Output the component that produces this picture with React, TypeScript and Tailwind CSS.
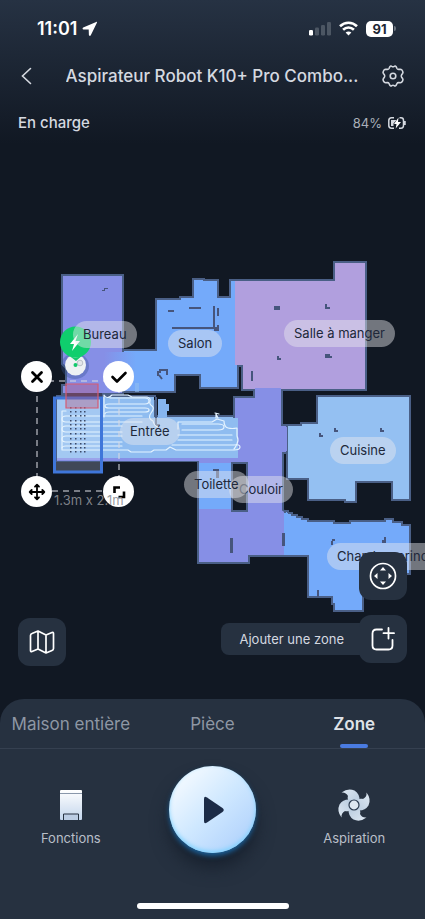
import { useState } from "react";

type Room = { name: string; place: string };

const rooms: Room[] = [
  { name: "Bureau", place: "left-[73px] top-[177px]" },
  { name: "Salon", place: "left-[168px] top-[186px]" },
  { name: "Salle à manger", place: "left-[284px] top-[176px]" },
  { name: "Entrée", place: "left-[120px] top-[274px]" },
  { name: "Couloir", place: "left-[229px] top-[332px]" },
  { name: "Toilette", place: "left-[184px] top-[327px]" },
  { name: "Cuisine", place: "left-[330px] top-[293px]" },
  { name: "Chambre principale", place: "left-[327px] top-[399px]" },
];

const tabs = ["Maison entière", "Pièce", "Zone"];

function StatusBar() {
  return (
    <div className="flex h-[56px] items-center justify-between pt-px pl-[37px] pr-[29px] text-white">
      <div className="flex items-center gap-[5px]">
        <span className="text-[18px] leading-[22px] font-semibold">11:01</span>
        <svg width="16" height="16" viewBox="0 0 16 16" fill="currentColor" aria-hidden="true">
          <path d="M14.2.9 1.2 6.500c-1 .5-.8 1.800.3 1.900l5.200.2.2 5.300c.1 1.100 1.500 1.300 1.900.3L14.900 1.700c.3-.6-.2-1-.7-.8Z" />
        </svg>
      </div>
      <div className="flex items-center gap-[8px]">
        <svg width="22" height="15" viewBox="0 0 22 15" fill="#4c5663" aria-hidden="true">
          <rect x="0" y="9" width="4" height="5.500" rx="1.200" fill="#fff" />
          <rect x="6" y="6.500" width="4" height="8" rx="1.200" />
          <rect x="12" y="4" width="4" height="10.500" rx="1.200" />
          <rect x="18" y="1" width="4" height="13.500" rx="1.200" />
        </svg>
        <svg width="19" height="15" viewBox="0 0 19 15" fill="none" stroke="currentColor" strokeWidth="2.600" aria-hidden="true">
          <path d="M1 5.200c4.900-4.700 12.100-4.700 17 0" />
          <path d="M4.100 8.700c3.100-3 7.700-3 10.800 0" />
          <path d="M9.500 14.600 6.600 11.600c1.700-1.500 4.100-1.500 5.800 0Z" fill="currentColor" stroke="none" />
        </svg>
        <div className="flex items-center gap-px">
          <span className="flex h-[16px] w-[27px] items-center justify-center rounded-[5px] bg-white text-[13px] leading-[16px] font-bold text-[#1d2734]">
            91
          </span>
          <span className="h-[5px] w-[2px] rounded-r-full bg-[#6a737f]" />
        </div>
      </div>
    </div>
  );
}

function FloorPlan() {
  return (
    <svg width="425" height="555" viewBox="0 144 425 555" className="block" aria-hidden="true">
      <defs>
        <linearGradient id="mix" x1="104" y1="0" x2="136" y2="0" gradientUnits="userSpaceOnUse">
          <stop offset="0" stopColor="#868fe6" />
          <stop offset="1" stopColor="#74aafa" />
        </linearGradient>
      </defs>

      <g stroke="#4a5f86" strokeWidth="2">
        <path fill="#868fe6" d="M62 275H123V394H62V385H66V368L62 364Z" />
        <path
          fill="#74aafa"
          d="M123 350H156V299H180V297H193V279H204V280H218V297H230V280H238V388H200V375H175V392H123Z"
        />
        <path fill="#b19fde" d="M235 280H334V262H366V390H242V366H238V280Z" />
        <path fill="#868fe6" d="M234 397H254V390H282V425H288V453H283V510L286 512V556H249V563H198V461H234Z" />
        <path
          fill="#94c0f2"
          d="M317 396H410V500H392V482H356V502H345V500H308V479H287V425H301V423H317Z"
        />
        <path
          fill="#74aafa"
          d="M285 511H288V513H292V515H297V517H302V519H308V521H334V523H350V521H385V519H393V522H402V525H410V574H363V611H334V604H332V597H308V556H285Z"
        />
        <path fill="#8fbcf0" d="M57 396H155V416H234V461H57Z" />
      </g>

      <path fill="#b19fde" d="M235 281H240V365H235Z" />
      <path fill="#868fe6" d="M255 388H281V398H255ZM282 427H287V451H282ZM231 418H238V460H231ZM199 458H246V464H199ZM57 458H238V461H57Z" />
      <path fill="url(#mix)" d="M104 352H150V391H104Z" />
      <path fill="#8fbcf0" d="M57 397H154V458H57ZM152 418H238V458H152Z" />
      <path fill="#74aafa" d="M199 463H232V509H199ZM284 513H288V555H284Z" />
      <path fill="#111823" stroke="#4a5f86" strokeWidth="2" d="M232 463H247V511H232Z" />
      <path fill="#111823" d="M239 368H241V388H239Z" />
      <path fill="#86b5ef" d="M158 399H166V404H169V411H167V418H158Z" />
      <path fill="#8fbcf0" d="M135 383H139V392H135Z" opacity=".6" />
      <path fill="#111823" d="M154 397H156V400H154Z" />
      <path fill="none" stroke="#4a5f86" strokeWidth="2" d="M156 397V425H160" />

      <g fill="#46557c">
        <path d="M102 290H104V288H108V289H105V291H102ZM230 538H233V553H230ZM282 533H285V546H282ZM251 371H253V381H251Z" />
        <path d="M274 306H280V310H274ZM325 304H327V307H330V309H325ZM277 356H279V358H281V360H277ZM325 354H330V356H332V358H325Z" />
        <path d="M319 433H321V435H323V437H319ZM334 428H336V430H338V432H334ZM380 428H382V430H384V432H380Z" />
        <path d="M168 310H174V312H168ZM189 307H201V309H189ZM213 306H215V329H213ZM217 308H219V316H217ZM217 325H219V331H214V329H172V327H217Z" />
        <path d="M331 541H332V539H335V541H333V545H331ZM382 540H384V537H386V543H382ZM213 469H219V478H216V471H213ZM317 590H319V597H317Z" />
      </g>
      <path d="M158 376v-4h2v-2h7v5M159 375l3 4" fill="none" stroke="#46557c" strokeWidth="2" />

      <path fill="#3a3f59" d="M66 393H102V398H66Z" />
      <path fill="#404858" d="M55 462H101V472H55Z" />
      <path fill="#ffffff" opacity=".18" d="M57 399H101V460H57Z" />

      <g fill="none" stroke="#e4f3ff" strokeWidth="1.200" strokeLinejoin="round" strokeLinecap="round">
        <path d="M104 417V395q3 5 8 0h16l4 2h15q4 1 3 4t2 5-1 7 2 8q1 5 5 6" />
        <path d="M110 398h35q4 0 4 3t-4 3h-36q-4 0-4 2t4 2h36q4 0 4 2t-4 2h-36q-4 0-4 2" />
        <path d="M142 416H66q-4 0-4 3t4 3h76M122 426H66q-4 0-4 3t4 3h56M122 436H66q-4 0-4 3t4 3h56M122 446H66q-4 0-4 2" />
        <path d="M66 411h-4v39h66l3 2h20l3-2h12l4-3 6 3h58q6 0 6-3t-6-2h-62" />
        <path d="M178 429v-7h34l5-3 7 2q0 6 4 7t9 0v8q2 4 0 8t-3 5" />
        <path d="M182 424h36q6 0 6 3t-6 3h-36M178 435h54M178 440h54M216 418v-4l2 4M215 413l4 1" />
      </g>

      <g fill="#3c4a68">
        {[70, 75, 80, 84].map((x) =>
          [407, 411, 415, 420, 424, 428, 433, 438, 443, 447, 451].map((y) => (
            <rect key={`${x}-${y}`} x={x} y={y} width="1.500" height="1.500" />
          )),
        )}
      </g>

      <path d="M37 381H119V491H37Z" fill="none" stroke="#d5d9e0" strokeWidth="1.500" strokeDasharray="6 5" opacity=".7" />
      <path d="M54.500 398H101.500V472H54.500Z" fill="none" stroke="#3f76da" strokeWidth="3" />
      <path d="M66 384H98V408H66Z" fill="#b95075" fillOpacity=".35" stroke="#d65c72" strokeWidth="1.200" />

      <ellipse cx="75" cy="366" rx="14" ry="13" fill="#33508f" opacity=".35" />
      <circle cx="75.500" cy="365" r="10.500" fill="#eef1f4" />
      <circle cx="80" cy="363" r="2.800" fill="#e4e6ea" stroke="#bcc1c9" />
      <path d="M67 354q8 7 17 0l-8 7Z" fill="#12c96b" />
      <circle cx="75.500" cy="365" r="2" fill="#12c96b" />
      <circle cx="75.500" cy="342" r="15.500" fill="#0fce6d" />
      <path d="m78 334-8 10h4l-2 7 8-10h-4.500Z" fill="#fff" />
    </svg>
  );
}

const handle = "absolute flex size-[31px] items-center justify-center rounded-full bg-white text-black";
const tile = "flex size-[48px] items-center justify-center rounded-[12px] bg-[#263140] text-white";

function ZoneHandles() {
  return (
    <>
      <button className={`${handle} left-[21px] top-[217px]`} aria-label="Supprimer">
        <svg width="16" height="16" viewBox="0 0 16 16" stroke="currentColor" strokeWidth="2.800" strokeLinecap="round">
          <path d="m3.500 3.500 9 9m0-9-9 9" />
        </svg>
      </button>
      <button className={`${handle} left-[103px] top-[217px]`} aria-label="Valider">
        <svg width="18" height="16" viewBox="0 0 18 16" fill="none" stroke="currentColor" strokeWidth="2.600" strokeLinecap="round" strokeLinejoin="round">
          <path d="m2.500 8 4.500 4.500 8.500-8.500" />
        </svg>
      </button>
      <button className={`${handle} left-[21px] top-[332px]`} aria-label="Déplacer">
        <svg width="18" height="18" viewBox="0 0 18 18" fill="none" stroke="currentColor" strokeWidth="1.800" strokeLinecap="round" strokeLinejoin="round">
          <path d="M9 2v14M2 9h14M7 3.700l2-2 2 2M7 14.300l2 2 2-2M3.700 7l-2 2 2 2M14.300 7l2 2-2 2" />
        </svg>
      </button>
      <button className={`${handle} left-[103px] top-[332px]`} aria-label="Redimensionner">
        <svg width="16" height="16" viewBox="0 0 16 16" fill="none" stroke="currentColor" strokeWidth="2.600">
          <path d="M3.500 9V3.500H9M13 7.500V13H7.500" />
        </svg>
      </button>
      <span className="absolute left-[54px] top-[347px] text-[13px] leading-[18px] whitespace-nowrap text-[#8c8f95]/90">
        1.3m x 2.1m
      </span>
    </>
  );
}

export default function App() {
  const [active, setActive] = useState("Zone");
  return (
    <div className="flex min-h-screen flex-col overflow-hidden bg-[#111823] font-['Inter','Liberation_Sans',sans-serif] text-[#d5d9e0]">
      <header className="bg-linear-to-b from-[#263243] to-[#111823]">
        <StatusBar />
        <div className="flex h-[40px] items-center justify-between pl-[19px] pr-[20px]">
          <button aria-label="Retour" className="flex w-[24px]">
            <svg width="16" height="20" viewBox="0 0 16 20" fill="none" stroke="currentColor" strokeWidth="1.600" strokeLinecap="round">
              <path d="m11.500 2.500-8 7.500 8 7.500" />
            </svg>
          </button>
          <h1 className="truncate text-[17px] leading-[24px] font-medium">Aspirateur Robot K10+ Pro Combo...</h1>
          <button aria-label="Réglages">
            <svg width="24" height="24" viewBox="0 0 24 24" fill="none" stroke="currentColor" strokeWidth="1.600" strokeLinejoin="round">
              <path d="M8.700 3q1-1.500 2.100-.6 1.200.8 2.400 0 1.100-.9 2.100.6l.7 1.500q.5 1 1.800.9l1.600-.2q1.300 0 2.100 1.600.9 1.600.1 2.700l-1 1.300q-.7 1.200 0 2.400l1 1.300q.8 1.100-.1 2.700-.8 1.600-2.100 1.600l-1.600-.2q-1.300-.1-1.800.9l-.7 1.500q-1 1.500-2.100.6-1.200-.8-2.400 0-1.100.9-2.100-.6L8 19.500q-.5-1-1.800-.9l-1.600.2q-1.300 0-2.100-1.600-.9-1.600-.1-2.700l1-1.300q.7-1.200 0-2.400l-1-1.300q-.8-1.100.1-2.700.8-1.600 2.100-1.600l1.600.2q1.300.1 1.800-.9Z" />
              <circle cx="12" cy="12" r="2.800" />
            </svg>
          </button>
        </div>
        <div className="flex h-[48px] items-center justify-between pt-[6px] pr-[19px] pl-[18px]">
          <span className="text-[15px] leading-[20px] font-medium">En charge</span>
          <span className="flex items-center gap-[6px] text-[13px] leading-[16px] text-[#a9afb9]">
            84%
            <svg width="18" height="12" viewBox="0 0 18 12" aria-hidden="true">
              <path d="M6 .8H3.500Q.8.800.8 3.500v5q0 2.700 2.700 2.700H6M11.500.8h1.500q2.500 0 2.500 2.700v5q0 2.700-2.500 2.700h-2M17 4v4" fill="none" stroke="#d5d9e0" strokeWidth="1.500" />
              <path d="M3 3h5.500L5.500 6.500V9H3Z" fill="#d5d9e0" />
              <path d="M10.500.5 6 7h2.500l-.8 4.500L13 5h-3Z" fill="#fff" />
            </svg>
          </span>
        </div>
      </header>

      <main className="relative min-h-[555px] flex-1">
        <div className="absolute inset-0 overflow-hidden">
          <FloorPlan />
          {rooms.map((r) => (
            <span
              key={r.name}
              className={`absolute rounded-full bg-[#e9e9ee]/45 px-[10px] text-[13px] leading-[27px] whitespace-nowrap text-[#20283a] ${r.place}`}
            >
              {r.name}
            </span>
          ))}
          <ZoneHandles />
        </div>

        <button className={`absolute bottom-[33px] left-[18px] ${tile}`} aria-label="Cartes">
          <svg width="26" height="26" viewBox="0 0 26 26" fill="none" stroke="currentColor" strokeWidth="1.700" strokeLinejoin="round">
            <path d="M1.500 6.500Q1.500 5 3 4.500L9 2l8 4 6-2.500q1.500-.5 1.500 1v15q0 1.500-1.500 2L17 24l-8-4-6 2.500q-1.500.5-1.500-1ZM9 2v18M17 6v18" />
          </svg>
        </button>
        <div className="absolute right-[18px] bottom-[36px] flex flex-col items-end gap-[15px]">
          <button className={tile} aria-label="Recentrer la carte">
            <svg width="28" height="28" viewBox="0 0 28 28" fill="currentColor">
              <circle cx="14" cy="14" r="12.500" fill="none" stroke="currentColor" strokeWidth="1.700" />
              <path d="M14 5l3 3.500h-6ZM14 23l3-3.500h-6ZM5 14l3.500-3v6ZM23 14l-3.500-3v6Z" />
            </svg>
          </button>
          <div className="flex items-center">
            <span className="-mr-[12px] rounded-[8px] bg-[#263140] pr-[27px] pl-[18px] text-[13px] leading-[32px]">Ajouter une zone</span>
            <button className={`relative ${tile}`} aria-label="Ajouter une zone">
              <svg width="26" height="26" viewBox="0 0 26 26" fill="none" stroke="currentColor" strokeWidth="1.800" strokeLinecap="round">
                <path d="M12 3.500H6.500q-4 0-4 4v12q0 4 4 4h12q4 0 4-4V14M18.500 2v10.500M13.500 7.200H24" />
              </svg>
            </button>
          </div>
        </div>
      </main>

      <footer className="rounded-t-[24px] bg-[#263140]">
        <div role="tablist" className="grid grid-cols-3 border-b border-[#354050]">
          {tabs.map((t) => (
            <button
              key={t}
              role="tab"
              aria-selected={t === active}
              onClick={() => setActive(t)}
              className={`flex flex-col items-center pt-[14px] text-[17px] leading-[22px] whitespace-nowrap ${
                t === active ? "font-semibold text-[#dfe2e7]" : "text-[#8e97a4]"
              }`}
            >
              {t}
              <span className={`mt-[9px] h-[4px] w-[28px] rounded-full ${t === active ? "bg-[#4a7be0]" : ""}`} />
            </button>
          ))}
        </div>
        <div className="grid grid-cols-3 items-start pt-[17px] text-[13px] leading-[18px] text-[#b9bfc8]">
          <button className="flex flex-col items-center gap-[5px] pt-[20px]">
            <svg width="36" height="38" viewBox="0 0 36 38" aria-hidden="true">
              <defs>
                <linearGradient id="station" x1="0" y1="0" x2="0" y2="1">
                  <stop offset="0" stopColor="#fff" />
                  <stop offset="1" stopColor="#c3d5ec" />
                </linearGradient>
              </defs>
              <rect x="7" y="4" width="22" height="30" rx="1" fill="url(#station)" />
              <path d="M7 7.500h22" stroke="#6c7d94" strokeWidth=".8" />
              <path d="M10.500 34v-6h15v6" fill="#bccde4" stroke="#263140" />
            </svg>
            Fonctions
          </button>
          <div className="flex h-[153px] justify-center">
            <button
              aria-label="Démarrer"
              className="flex size-[87px] items-center justify-center rounded-full bg-linear-to-br from-white via-[#cfe8ff] to-[#a9ccfb] shadow-[0_3px_5px_#1b6099,0_14px_18px_#17202d,inset_0_-2px_4px_#7fd2ff]"
            >
              <svg width="30" height="30" viewBox="0 0 30 30" fill="#1b2b47" aria-hidden="true">
                <path d="M7 4Q7 .5 10 2.500l15.500 10.500q2.500 2 0 4L10 27.500Q7 29.500 7 26Z" />
              </svg>
            </button>
          </div>
          <button className="flex flex-col items-center gap-[5px] pt-[20px]">
            <svg width="36" height="38" viewBox="0 0 36 38" aria-hidden="true">
              <defs>
                <linearGradient id="blade" x1="0" y1="0" x2="1" y2="1">
                  <stop offset="0" stopColor="#dfe9f3" />
                  <stop offset="1" stopColor="#b4c8dc" />
                </linearGradient>
              </defs>
              {[0, 90, 180, 270].map((a) => (
                <path
                  key={a}
                  d="M18 19C12 17 11 12 12 10Q10 6 5.500 6.500 12 1.500 18.500 4.500 24 8 23.500 15Q22 19 18 19Z"
                  fill="url(#blade)"
                  transform={`rotate(${a} 18 19)`}
                />
              ))}
              <circle cx="18" cy="19" r="5" fill="#dde7f1" stroke="#2b3b50" strokeWidth="1.200" />
            </svg>
            Aspiration
          </button>
        </div>
        <div className="mx-auto mt-[-16px] mb-[10px] h-[6px] w-[152px] rounded-full bg-white" />
      </footer>
    </div>
  );
}
